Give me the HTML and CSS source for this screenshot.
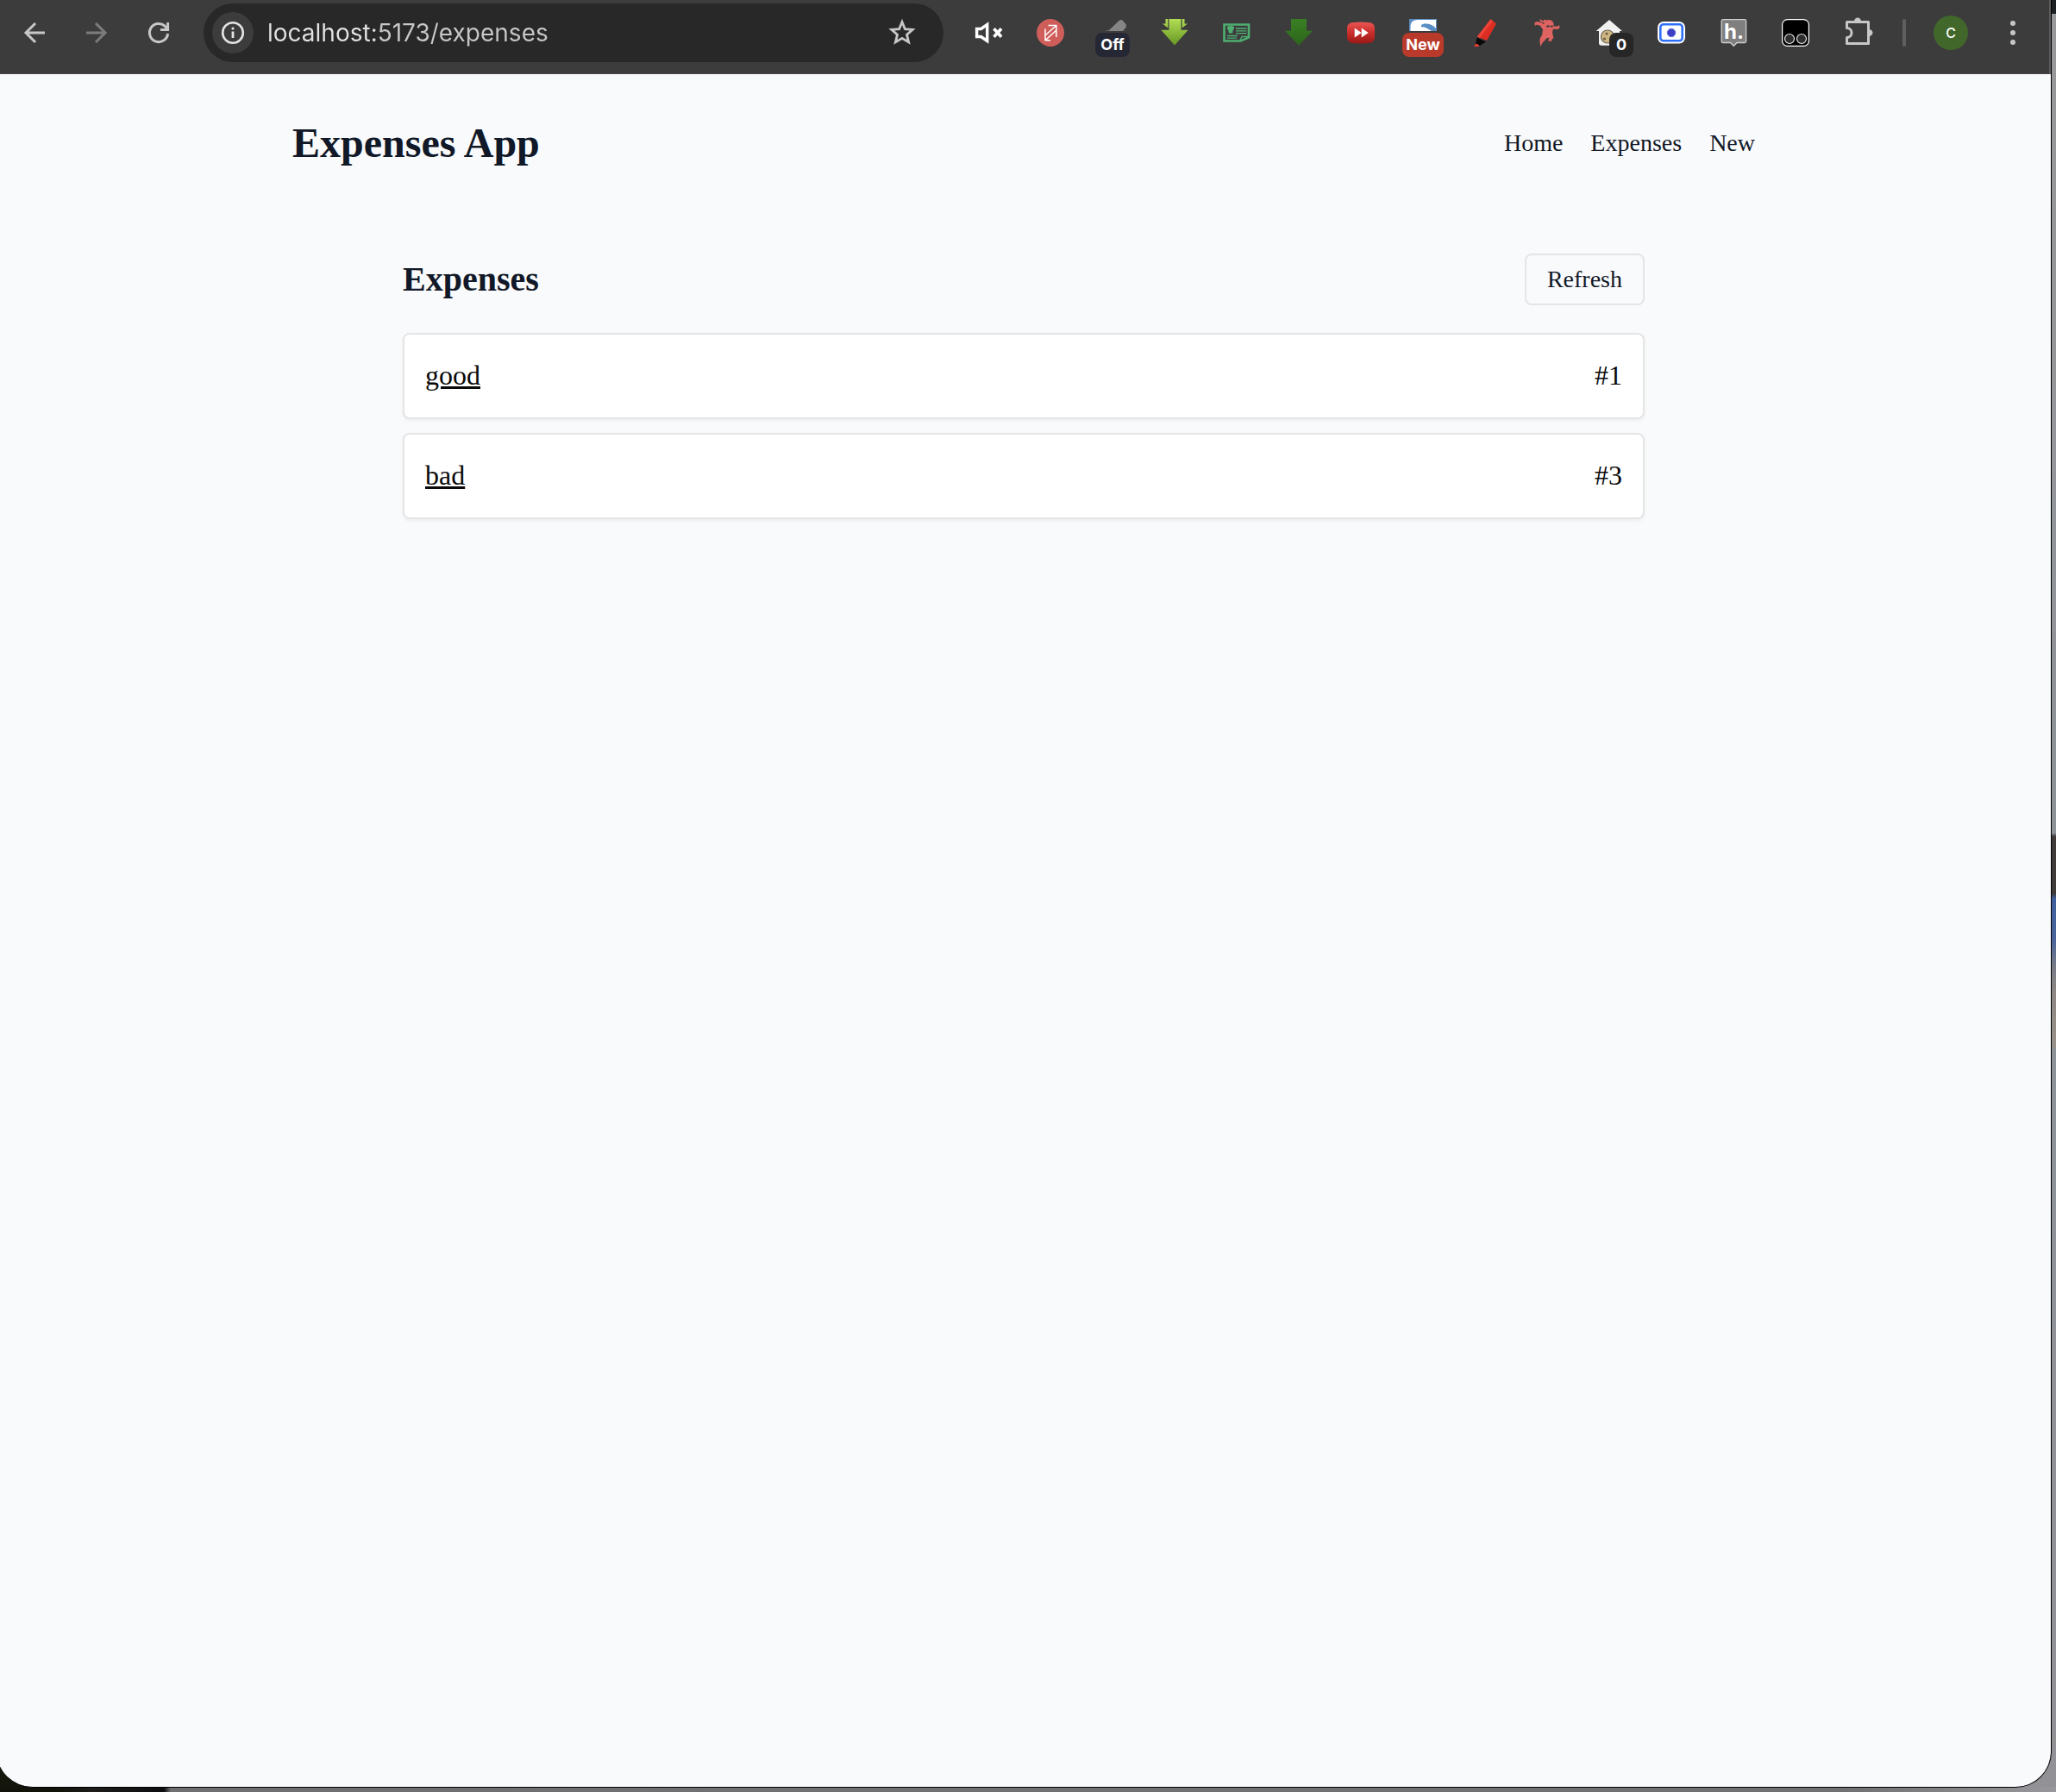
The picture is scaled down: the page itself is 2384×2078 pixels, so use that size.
FILE: index.html
```html
<!DOCTYPE html>
<html lang="en">
<head>
<meta charset="utf-8">
<title>Expenses App</title>
<link rel="stylesheet" href="styles.css">
</head>
<body>
<div class="window">
  <div class="toolbar">
    <div class="group">
      <button class="tool" type="button" aria-label="Back"><svg class="icon line" viewBox="0 0 32 32"><path d="M17 5 6 16l11 11M6 16H28"/></svg></button>
      <button class="tool dim" type="button" aria-label="Forward"><svg class="icon line" viewBox="0 0 32 32"><path d="M15 5l11 11-11 11M26 16H4"/></svg></button>
      <button class="tool" type="button" aria-label="Reload"><svg class="icon line" viewBox="0 0 32 32"><path d="M26.6 17A10.6 10.6 0 1 1 23 8L26 11.5M26.6 4v8.6H18"/></svg></button>
    </div>
    <div class="address">
      <button class="site-info" type="button" aria-label="Site information"><svg class="icon" viewBox="0 0 32 32"><circle cx="16" cy="16" r="11.8" fill="none" stroke="#e3e3e3" stroke-width="2.6"/><circle cx="16" cy="11" r="1.6" fill="#e3e3e3"/><path d="M16 14.5V22" stroke="#e3e3e3" stroke-width="2.8"/></svg></button>
      <input class="url" type="text" aria-label="Address" value="localhost:5173/expenses">
      <button class="bookmark" type="button" aria-label="Bookmark"><svg class="icon" viewBox="0 0 32 32"><path d="M16 3.5l3.4 8.2 8.8.7-6.7 5.8 2.1 8.7L16 22.3l-7.6 4.6 2.1-8.7-6.7-5.8 8.8-.7z" fill="none" stroke="#c7c7c7" stroke-width="2.8"/></svg></button>
    </div>
    <div class="group">
      <button class="tool" type="button" aria-label="Mute tab"><svg class="icon" viewBox="0 0 32 32"><path d="M2.6 11.5H7.5L14.7 6.5V25.5L7.5 20.5H2.6Z" fill="none" stroke="#fff" stroke-width="3.4"/><path d="M22.5 11.2l8.6 9.6M31.1 11.2l-8.6 9.6" stroke="#fff" stroke-width="3.6"/></svg></button>
      <button class="tool" type="button" aria-label="Link tool"><svg class="icon" viewBox="0 0 32 32"><circle cx="16" cy="16" r="16" fill="#cf5e5b"/><path d="M10 11.5V24.800H16M10 24.800L23 13M13.500 7.500H22.800V21M22.800 7.500L10 19" fill="none" stroke="#fff" stroke-width="1.500"/></svg></button>
      <button class="tool" type="button" aria-label="Eraser"><svg class="icon" viewBox="0 0 32 32"><path d="M11 14L23.5 2Q26 0 28 2L31 5.5Q33 8 31 10.5L28 14ZM9 13h1.5v1H9z" fill="#858585"/></svg><span class="badge navy">Off</span></button>
      <button class="tool" type="button" aria-label="Download media"><svg class="icon" viewBox="0 0 32 32"><defs><linearGradient id="lime" x2="0" y2="1"><stop stop-color="#b2de55"/><stop offset="1" stop-color="#669622"/></linearGradient></defs><path d="M9.5 0h14v12.7h8.2L16 30.5.3 12.7h9.2zM5.500 0h2.800v10.500L2 5.500h3.500zM24.700 0h2.800v5.500H31l-6.300 5z" fill="url(#lime)"/></svg></button>
      <button class="tool" type="button" aria-label="Reader"><svg class="icon" viewBox="0 0 32 32"><g fill="none" stroke="#4eae70"><path d="M1.5 6.5H30V21.5L20.5 25.5H1.5Z" stroke-width="2.6"/><path d="M19.5 25.5L22 20.5H30M15 11H27.5M15 13.8H27.5M15 16.6H27.5M5 19.5H17M5 22.2H16" stroke-width="1.3"/></g><path d="M5 9q4-2 8 0v3h-1l-1 4.500H7L6 12H5z" fill="#4eae70"/></svg></button>
      <button class="tool" type="button" aria-label="Downloads"><svg class="icon" viewBox="0 0 32 32"><defs><linearGradient id="leaf" x2="0" y2="1"><stop stop-color="#398024"/><stop offset="1" stop-color="#2c641a"/></linearGradient></defs><path d="M7 0h18v13.7h7L16 30.7 0 13.7h7z" fill="url(#leaf)"/></svg></button>
      <button class="tool" type="button" aria-label="Playback speed"><svg class="icon" viewBox="0 0 32 32"><defs><linearGradient id="ruby" x2="0" y2="1"><stop stop-color="#eb5654"/><stop offset=".5" stop-color="#c92e2b"/><stop offset="1" stop-color="#981815"/></linearGradient></defs><path d="M7 4Q16 2.8 25 4 31.5 4.5 32 10V22Q31.5 27.5 25 28 16 29 7 28 .5 27.5 0 22V10Q.5 4.5 7 4Z" fill="url(#ruby)"/><path d="M8.7 10.5l8 5.5-8 5.5zM16.7 10.5l8 5.5-8 5.5z" fill="#fff"/></svg></button>
      <button class="tool" type="button" aria-label="Search tool"><svg class="icon" viewBox="0 0 32 32"><path d="M0 0h32v14H0z" fill="#5b8ec5"/><path d="M1.5 14V8Q2 1 10 1H31V11Q26 5 18 5.5 13 6 14 9.5 17 8.5 21 11L26 14Z" fill="#fff"/><path d="M14 8.5Q14.5 5.5 19 5.7 27 6 31 11.5V14H27Q22 8.5 14 8.5Z" fill="#5b8ec5"/></svg><span class="badge red">New</span></button>
      <button class="tool" type="button" aria-label="Highlighter"><svg class="icon" viewBox="0 0 32 32"><path d="M22.5.3L29 5.5 18 25 6.8 20.5Z" fill="#dc2d22"/><path d="M22.5.3L25 2.3 10 22 6.8 20.5Z" fill="#ef4338"/><path d="M6.8 21.5L17 26.5 9.5 31 5 28.5Z" fill="#080808"/><path d="M5.5 28.5L9.5 30.5 8 32H3Z" fill="#ed3b30"/></svg></button>
      <button class="tool" type="button" aria-label="Ninja"><svg class="icon" viewBox="0 0 32 32"><path d="M7 0l5 2.5L12 .5l3 1Q22-.5 23.5 5.5L23.5 8.5 28 8.5 30 7 30.5 10 28.5 12 23 11.500 22 15 22.500 18.500 23.500 21.500 21 24.500 21.500 26 17 25.500 18.500 21.500 15 22.500Q13 26 11 27L8 32 7.500 26Q7 22 10 19L11 12 7.500 7.500 3.500 6.800 1.700 8 1.500 4 5 3 10 4.500 12 6 13 4.500 8.500 3.500Z" fill="#df6360"/><ellipse cx="17" cy="8.4" rx="1.9" ry="1.2" fill="#3c3c3c"/><ellipse cx="21.3" cy="8.600" rx="1.500" ry="1.200" fill="#3c3c3c"/></svg></button>
      <button class="tool" type="button" aria-label="Cookies"><svg class="icon" viewBox="0 0 32 32"><path d="M16 1L31 14H28V28Q28 30.7 25 30.7H7Q4 30.7 4 28V14H.7Z" fill="#f1f1f1"/><circle cx="14" cy="20.5" r="7.5" fill="#cdb684" stroke="#6a6252" stroke-width="1.2"/><circle cx="13" cy="17" r="1.6" fill="#6e5d40"/><circle cx="10.5" cy="23" r="1.6" fill="#6e5d40"/></svg><span class="badge dark">0</span></button>
      <button class="tool" type="button" aria-label="Screen capture"><svg class="icon" viewBox="0 0 32 32"><rect y="3" width="32" height="25.5" rx="7" fill="#fff"/><rect x="3.3" y="6.3" width="25.4" height="19" rx="3.5" fill="#fff" stroke="#2d6ff5" stroke-width="2.6"/><circle cx="16" cy="16" r="4.7" fill="#3c3fc4" stroke="#5870dc"/></svg></button>
      <button class="tool" type="button" aria-label="Annotations"><svg class="icon" viewBox="0 0 32 32"><path d="M4 .7H29Q30.6.7 30.6 2.5V25.7Q30.6 27.5 29 27.5H20L16.3 31.3 12.6 27.5H4Q2.2 27.5 2.2 25.7V2.5Q2.2.7 4 .7Z" fill="#7f7f7f" stroke="#cfcfcf" stroke-width="1.3"/><text class="mark" x="5" y="23">h.</text></svg></button>
      <button class="tool" type="button" aria-label="User scripts"><svg class="icon" viewBox="0 0 32 32"><rect x=".6" y=".6" width="30.8" height="30.8" rx="6" fill="#000" stroke="#fff" stroke-width="1.2"/><g fill="#2e2e2e" stroke="#e8e8e8" stroke-width="1.2"><circle cx="9" cy="23" r="5.5"/><circle cx="23" cy="23" r="5.5"/></g></svg></button>
      <button class="tool" type="button" aria-label="Extensions"><svg class="icon" viewBox="0 0 32 32"><path d="M3.5 3.5H28.5V28.5H3.5V21.5A5.5 5.5 0 0 0 3.5 10.5Z" fill="none" stroke="#c7c7c7" stroke-width="3" stroke-linejoin="round"/><path d="M12 3a4 4.5 0 0 1 8 0zM29 12a4.5 4 0 0 1 0 8z" fill="#c7c7c7"/></svg></button>
    </div>
    <div class="divider"></div>
    <div class="group">
      <button class="tool" type="button" aria-label="Profile"><span class="avatar">C</span></button>
      <button class="tool" type="button" aria-label="Menu"><svg class="icon" viewBox="0 0 32 32" fill="#c7c7c7"><circle cx="16" cy="5" r="3"/><circle cx="16" cy="16" r="3"/><circle cx="16" cy="27" r="3"/></svg></button>
    </div>
  </div>
  <div class="page">
    <header class="site-header">
      <h1 class="brand">Expenses App</h1>
      <nav class="nav">
        <a href="#home">Home</a>
        <a href="#expenses">Expenses</a>
        <a href="#new">New</a>
      </nav>
    </header>
    <main class="content">
      <div class="title-row">
        <h2 class="title">Expenses</h2>
        <button class="refresh" type="button">Refresh</button>
      </div>
      <ul class="list">
        <li class="card"><a href="#expense-1">good</a><span>#1</span></li>
        <li class="card"><a href="#expense-3">bad</a><span>#3</span></li>
      </ul>
    </main>
  </div>
</div>
</body>
</html>
```
FILE: styles.css
```css
* {
  box-sizing: border-box;
}

body {
  margin: 0;
  padding: 0 5px 5px 0;
  min-height: 100vh;
  display: flex;
  overflow-x: hidden;
  font-family: "Liberation Serif", "Times New Roman", serif;
  /* desktop wallpaper showing round the window */
  background:
    linear-gradient(to right, #12140c 0 70px, #1d1c1b 110px, #0d0d10 190px, #6f6f72 198px, #717174 90%, #98979c) left bottom / 100% 6px no-repeat,
    linear-gradient(#14160c, #14160c) left bottom / 60px 40px no-repeat,
    linear-gradient(#1b1f22 0 16px, #98989a 16px, #8d9298 966px, #3f3b3a 970px 1036px, #3f5f9c 1042px, #4a649a 1090px, #777b88 1120px, #8b8684 1150px, #99928a 1213px, #8d9299 1217px, #929196) right top / 60px 100% no-repeat;
}

button {
  margin: 0;
  padding: 0;
  border: 0;
  background: none;
  font: inherit;
}

/* the window's left edge runs just past the screen */
.window {
  flex: 1;
  display: flex;
  flex-direction: column;
  margin-left: -4px;
  overflow: hidden;
  border: solid #000;
  border-width: 0 1px 1px 0;
  border-radius: 0 0 42px 42px;
  background: #f9fafc;
}

.toolbar {
  display: flex;
  align-items: center;
  padding: 4px 6px 13px 8px;
  border-right: 2px solid #5c5c5c;
  border-bottom: 1px solid #4a4648;
  background: #3c3c3c;
  font-family: Inter, "Liberation Sans", sans-serif;
}

.group {
  display: flex;
}

.tool {
  position: relative;
  display: flex;
  align-items: center;
  justify-content: center;
  width: 72px;
  height: 68px;
  color: #c7c7c7;
}

.dim {
  color: #7c7c7c;
}

.icon {
  display: block;
  width: 32px;
  height: 32px;
  overflow: visible;
}

.line {
  fill: none;
  stroke: currentColor;
  stroke-width: 3;
}

.mark {
  font-weight: 700;
  font-size: 24px;
  fill: #fff;
}

.address {
  flex: 1;
  display: flex;
  align-items: center;
  gap: 16px;
  height: 68px;
  margin: 0 16px;
  padding: 0 32px 0 10px;
  border-radius: 34px;
  background: #282828;
}

.site-info {
  display: flex;
  align-items: center;
  justify-content: center;
  width: 48px;
  height: 48px;
  border-radius: 50%;
  background: #3c3c3c;
}

/* host name brighter than the rest of the address */
.url {
  flex: 1;
  min-width: 0;
  padding: 0;
  border: 0;
  outline: 0;
  font: 28px/40px Inter, "Liberation Sans", sans-serif;
  color: transparent;
  background: linear-gradient(to right, #e3e3e3 124px, #c7c7c7 124px);
  background-clip: text;
}

.badge {
  position: absolute;
  top: 34px;
  left: 50%;
  height: 28px;
  padding: 0 4px;
  border-radius: 8px;
  color: #fff;
  font-weight: 700;
  font-size: 18px;
  line-height: 28px;
  text-align: center;
}

.navy {
  width: 40px;
  margin-left: -20px;
  background: #252734;
}

.red {
  width: 48px;
  margin-left: -24px;
  background: #b93a2b;
}

.dark {
  width: 28px;
  background: #262626;
}

.divider {
  width: 4px;
  height: 32px;
  margin: 0 16px;
  border-radius: 2px;
  background: #5f5f5f;
}

.avatar {
  width: 40px;
  height: 40px;
  border-radius: 50%;
  background: #41672a;
  color: #fff;
  font-weight: 500;
  font-size: 16px;
  line-height: 40px;
  text-align: center;
}

.page {
  flex: 1;
  color: #111827;
}

.site-header {
  display: flex;
  align-items: center;
  justify-content: space-between;
  max-width: 1792px;
  margin: 0 auto;
  padding: 48px;
}

.brand {
  margin: 0;
  font-size: 48px;
  line-height: 64px;
}

.nav {
  display: flex;
  gap: 32px;
  font-size: 28px;
  line-height: 40px;
}

.nav a {
  color: inherit;
  text-decoration: none;
}

.content {
  max-width: 1536px;
  margin: 0 auto;
  padding: 48px;
}

.title-row {
  display: flex;
  align-items: center;
  justify-content: space-between;
  margin-bottom: 32px;
}

.title {
  margin: 0;
  font-size: 40px;
  line-height: 56px;
}

.refresh {
  padding: 8px 24px;
  border: 2px solid #e5e5e5;
  border-radius: 8px;
  color: inherit;
  font-size: 28px;
  line-height: 40px;
}

.list {
  display: flex;
  flex-direction: column;
  gap: 16px;
  margin: 0;
  padding: 0;
  list-style: none;
}

.card {
  display: flex;
  justify-content: space-between;
  padding: 23px 24px 25px;
  border: 2px solid #e5e5e5;
  border-radius: 8px;
  background: #fff;
  box-shadow: 0 2px 4px rgba(0, 0, 0, 0.05);
  color: #0a0a0a;
  font-size: 32px;
  line-height: 48px;
}

.card a {
  color: inherit;
  text-decoration-thickness: 3px;
}
```
